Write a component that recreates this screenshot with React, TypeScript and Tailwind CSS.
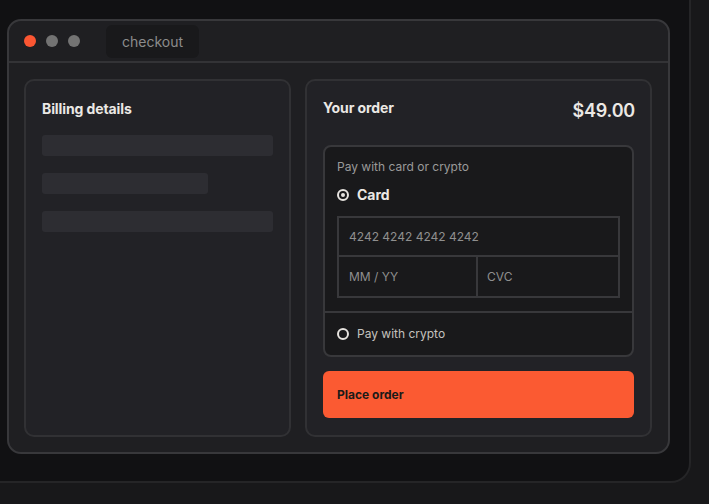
import React from 'react';

const font = { fontFamily: 'Inter, "Noto Sans", sans-serif' };

const Bar = ({ w }: { w: string }) => <div className={`h-[21px] rounded-[3px] bg-[#2d2d32] ${w}`} />;

export default function App() {
  return (
    <div className="min-h-screen w-full bg-[#18181a] overflow-hidden" style={font}>
      {/* outer shell */}
      <div className="w-[691px] h-[483px] bg-[#111113] border-r-2 border-b-2 border-[#252527] rounded-br-[20px] pt-[19px] pl-[7px]">
        {/* window */}
        <div className="w-[663px] h-[435px] rounded-[14px] border-2 border-[#38383b] bg-[#1f1f22] flex flex-col">
          {/* title bar */}
          <div className="h-[42px] shrink-0 border-b-2 border-[#333336] flex items-center pl-[15px]">
            <div className="flex gap-[10px]">
              <span className="w-3 h-3 rounded-full bg-[#fb5632]" />
              <span className="w-3 h-3 rounded-full bg-[#737373]" />
              <span className="w-3 h-3 rounded-full bg-[#737373]" />
            </div>
            <div className="ml-[26px] h-[33px] w-[93px] rounded-md bg-[#19191b] flex items-center justify-center text-[14px] text-[#8c8c8c]">
              checkout
            </div>
          </div>

          {/* content */}
          <div className="flex-1 grid grid-cols-[267px_347px] gap-[14px] pt-[16px] pb-[15px] pl-[15px]">
            {/* Billing */}
            <div className="rounded-[10px] border-2 border-[#313134] bg-[#222226] px-[16px] pt-[20px]">
              <h2 className="text-[14px] font-bold text-[#ebe8e4] leading-4 tracking-[-0.1px]">Billing details</h2>
              <div className="mt-[18px] flex flex-col gap-[17px]">
                <Bar w="w-[231px]" />
                <Bar w="w-[166px]" />
                <Bar w="w-[231px]" />
              </div>
            </div>

            {/* Order */}
            <div className="rounded-[10px] border-2 border-[#313134] bg-[#222226] pl-[16px] pr-[16px] pt-[18px]">
              <div className="flex items-start justify-between">
                <h2 className="text-[14px] font-bold text-[#ebe8e4] leading-4 mt-[1px] tracking-[-0.1px]">Your order</h2>
                <span className="text-[18px] font-semibold text-[#ebe8e4] leading-6 mr-[-1px] tracking-[-0.2px]">$49.00</span>
              </div>

              <div className="mt-[22px] rounded-lg border-2 border-[#38383b] bg-[#19191b]">
                <div className="px-[12px] pt-[12px]">
                  <p className="text-[12px] text-[#9a9a9a] leading-4">Pay with card or crypto</p>
                  <div className="mt-[10px] flex items-center gap-[8px]">
                    <span className="w-3 h-3 rounded-full border-2 border-[#e6e3df] flex items-center justify-center">
                      <span className="w-[4px] h-[4px] rounded-full bg-[#e6e3df]" />
                    </span>
                    <span className="text-[14px] font-bold text-[#ebe8e4] leading-5">Card</span>
                  </div>
                  <div className="mt-[11px] border-2 border-[#38383b] text-[12px] text-[#8f8f8f]">
                    <div className="h-[39px] flex items-center px-[10px] border-b-2 border-[#38383b]">4242 4242 4242 4242</div>
                    <div className="grid grid-cols-[139px_1fr] h-[39px]">
                      <div className="flex items-center px-[10px] border-r-2 border-[#38383b]">MM / YY</div>
                      <div className="flex items-center px-[9px]">CVC</div>
                    </div>
                  </div>
                </div>
                <div className="mt-[13px] border-t-2 border-[#38383b] h-[44px] flex items-center px-[12px] gap-[8px]">
                  <span className="w-3 h-3 rounded-full border-2 border-[#e6e3df]" />
                  <span className="text-[12px] text-[#c4c2bf]">Pay with crypto</span>
                </div>
              </div>

              <button className="mt-[14px] w-full h-[47px] rounded-md bg-[#fb5a32] text-left pl-[14px] text-[12px] font-bold text-[#1c1a19]">
                Place order
              </button>
            </div>
          </div>
        </div>
      </div>
    </div>
  );
}
